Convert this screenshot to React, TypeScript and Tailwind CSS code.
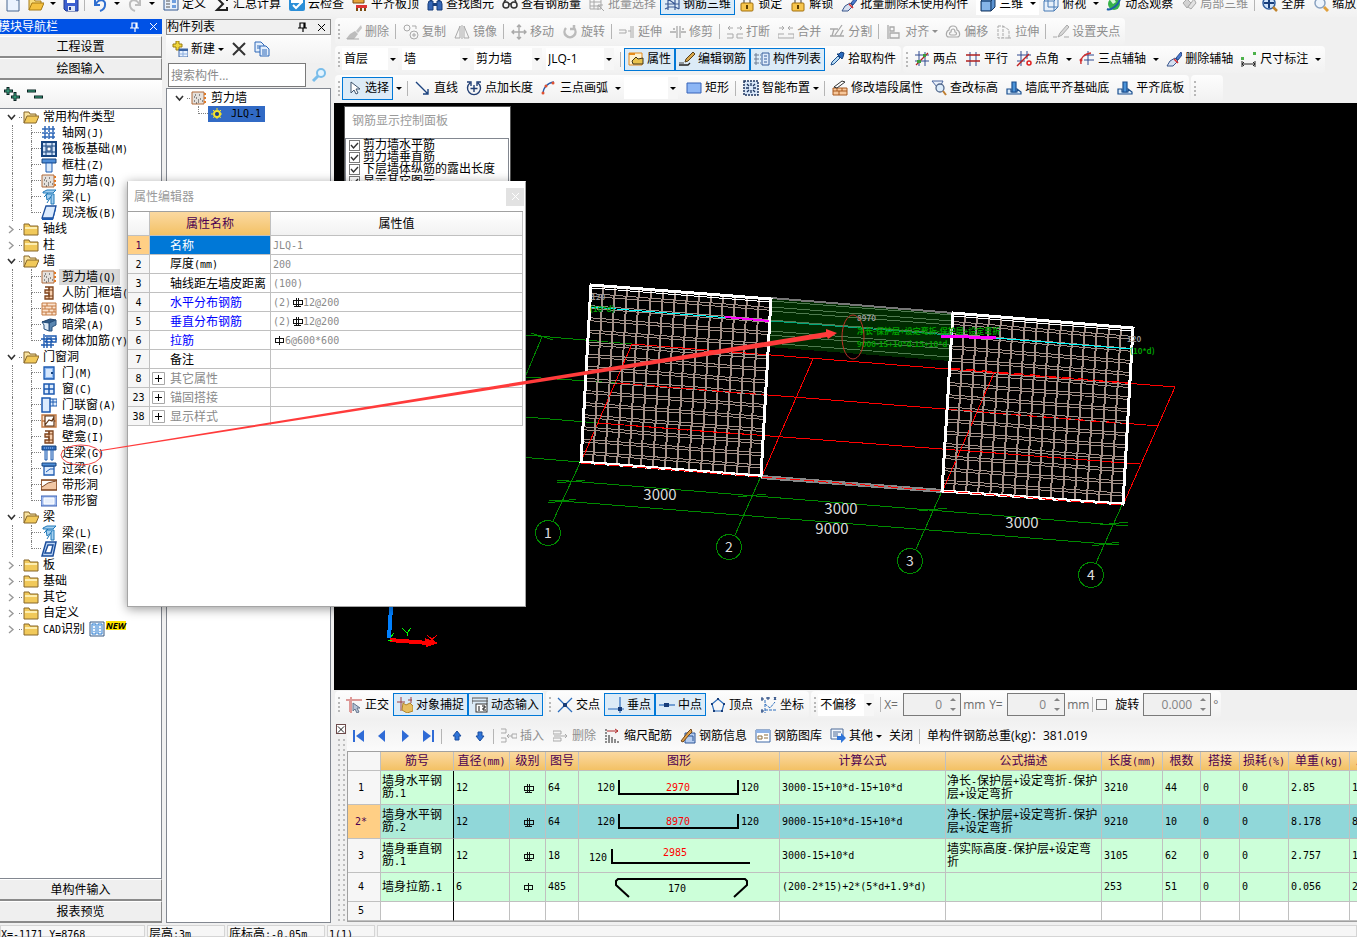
import { useState, type ReactNode } from 'react';
import clsx from 'clsx';

const MONO = "font-[family-name:'DejaVu_Sans_Mono',monospace] text-[10px]";

// 16x16 toolbar and tree glyphs
const G = '#a9a9a9';
const B = '#2f6bd6';
const icons: Record<string, ReactNode> = {
  newFile: <><path d="M2 1h9l3 3v11H2z" fill="#eaf3ff" stroke="#49668f" /><path d="M11 1v3h3" fill="none" stroke="#49668f" /></>,
  open: <><path d="M1 14V3h5l1 2h6v3" fill="#f9dc7c" stroke="#a87a14" /><path d="M1 14l3-7h12l-3 7z" fill="#f5c13f" stroke="#a87a14" /></>,
  save: <><path d="M1 1h14v14H3l-2-2z" fill="#3c5fd0" stroke="#203a90" /><path d="M4 1h8v6H4z" fill="#fff" /><path d="M5 10h7v5H5z" fill="#dfe6f5" /><path d="M6 11h2v3H6z" fill="#203a90" /></>,
  undo: <path d="M3 4v5h5M4 8c2-5 10-5 9 1c0 3-2 5-5 6" fill="none" stroke="#2f6fd0" strokeWidth="2" />,
  redo: <path d="M13 4v5H8M12 8c-2-5-10-5-9 1c0 3 2 5 5 6" fill="none" stroke="#bdbdbd" strokeWidth="2" />,
  define: <><path d="M1 2h14v12H1z" fill="#e8f0fb" stroke="#35598f" /><path d="M3 5h4M3 8h4M3 11h4" stroke="#555" /><path d="M9 4h4v3H9zM9 9h4v3H9z" fill="#6f9ede" /></>,
  sigma: <path d="M13 5V2H3l6 6-6 6h10v-3" fill="none" stroke="#222" strokeWidth="2" />,
  cloud: <><rect x="0" y="1" width="16" height="14" rx="2" fill="#2b8fd8" /><path d="M2 4c3-4 9-3 12 0v3H2z" fill="#fff" /><path d="M4 9l3 3 6-6" fill="none" stroke="#fff" strokeWidth="2" /></>,
  slabTop: <><path d="M1 3h11v4H1z" fill="#e5a33a" stroke="#7a4b10" /><path d="M4 9h11v3H4z" fill="#d33" /><path d="M5 12v3M9 12v3M13 12v3" stroke="#7a4b10" strokeWidth="2" /></>,
  find: <><path d="M2 5h4v9H1V8zM10 5h4l1 3v6h-5z" fill="#3566b5" stroke="#173d7a" /><path d="M3 2h2v3H3zM11 2h2v3h-2zM6 7h4v3H6z" fill="#173d7a" /></>,
  glasses: <><circle cx="4" cy="9" r="3" fill="none" stroke="#333" strokeWidth="1.500" /><circle cx="12" cy="9" r="3" fill="none" stroke="#333" strokeWidth="1.500" /><path d="M7 8h2M2 6l3-4M14 6l-2-4" stroke="#333" strokeWidth="1.500" /></>,
  batch: <path d="M1 2h11v11H1zM1 6h11M1 10h11M5 2v11M9 9l6 6M9 9v5M9 9h5" fill="none" stroke={G} />,
  rebar3d: <path d="M1 3h14M1 8h14M1 13l4-2h6l4 2M4 1v13M11 1v13M4 3l7 5M15 1v12" fill="none" stroke="#3a5a94" strokeWidth="1.200" />,
  lock: <><path d="M5 8V5a3 3 0 016 0v3" fill="none" stroke="#999" strokeWidth="2" /><rect x="2" y="7" width="12" height="8" rx="1" fill="#f7c64e" stroke="#a3700d" /><path d="M8 9v4" stroke="#5a3c00" strokeWidth="2" /></>,
  brush: <><path d="M15 1l-5 6 2 2 4-5z" fill="#4a7bd0" stroke="#2a4a8a" /><path d="M9 7l-5 3-3 5h6l5-5z" fill="#d5dff0" stroke="#3a568c" /><path d="M8 8l4 4" stroke="#d33" strokeWidth="1.600" /></>,
  brushGray: <><path d="M15 1l-5 6 2 2 4-5z" fill="#c6c6c6" /><path d="M9 7l-5 3-4 5h8l4-5z" fill="#bdbdbd" /><path d="M1 15h12" stroke={G} /></>,
  cube: <><path d="M1 5l4-4h10v10l-4 4H1z" fill="#5b92d0" stroke="#16365f" /><path d="M1 5h10v10M11 5l4-4" fill="none" stroke="#16365f" /><path d="M2 6h8v8H2z" fill="#86b5e8" /></>,
  top: <path d="M1 5l4-4h10v10l-4 4H1zM1 5h10v10M11 5l4-4M5 1v10h10" fill="#e7f0fa" stroke="#477bb5" />,
  orbit: <><circle cx="8" cy="8" r="6" fill="#37b34a" /><path d="M1 13C5 15 14 8 14 2" fill="none" stroke="#1d5ea8" strokeWidth="2" /><path d="M4 4l4-1 2 3-3 2z" fill="#d8f5da" /></>,
  orbitGray: <><path d="M2 7l4-4 4 4-4 5z" fill="#d2d2d2" stroke={G} /><path d="M7 11l6-8 2 4-5 6z" fill="#e2e2e2" stroke={G} /></>,
  zoomAll: <><circle cx="7" cy="7" r="6" fill="#cfe3fa" stroke="#315f9f" strokeWidth="1.500" /><path d="M7 2v10M2 7h10" stroke="#173d7a" strokeWidth="2" /><path d="M11 11l4 4" stroke="#c0832c" strokeWidth="2.500" /></>,
  zoomOut: <><circle cx="7" cy="7" r="5" fill="#edf4fc" stroke="#8aa2c0" strokeWidth="1.500" /><path d="M11 11l4 4" stroke="#e0a03c" strokeWidth="3" /></>,
  copy: <><circle cx="4" cy="4" r="3" fill="none" stroke={G} /><circle cx="11" cy="11" r="4" fill="none" stroke={G} /><path d="M9 2h4v3M11 9v4M9 11h4" fill="none" stroke={G} /></>,
  mirror: <path d="M6 2v12H1zM10 2v12h5zM8 1v14" fill="none" stroke={G} />,
  move: <path d="M8 1v14M1 8h14M6 3l2-2 2 2M6 13l2 2 2-2M3 6L1 8l2 2M13 6l2 2-2 2" fill="none" stroke={G} strokeWidth="1.400" />,
  rotate: <path d="M4 4a5.500 5.500 0 108 0M12 1v4H8" fill="none" stroke="#bbb" strokeWidth="2.500" />,
  extend: <path d="M0 6h7v3H0M9 7h3M14 2v12M12 2v12" fill="none" stroke={G} />,
  trim: <path d="M0 8h6M7 2v12M10 2v12M11 8h5M3 5h2M12 5h2" fill="none" stroke={G} strokeWidth="1.300" />,
  breakUp: <path d="M1 4h5M10 4h5M3 2L1 4l2 2M13 2l2 2-2 2M0 10h6v4H0M16 10h-6v4h6" fill="none" stroke={G} />,
  merge: <path d="M1 4h5M10 4h5M4 2l2 2-2 2M12 2l-2 2 2 2M0 10h6M10 10h6M0 14h16M0 10v4M16 10v4" fill="none" stroke={G} />,
  split: <path d="M1 5h8M1 12h14M13 1L6 11M3 12l2-7M11 12l3-6" fill="none" stroke={G} strokeWidth="1.300" />,
  align: <path d="M2 1v14M4 3h4v4H4zM4 9h9v5H4z" fill="none" stroke={G} strokeWidth="1.300" />,
  offset: <path d="M8 2c3 0 4 2 4 4 3 1 4 7 0 7H4C0 13 1 7 4 6c0-2 1-4 4-4zM8 5c2 0 2 2 2 3 2 0 2 3 0 3H6c-2 0-2-3 0-3 0-1 0-3 2-3z" fill="none" stroke={G} strokeWidth="1.200" />,
  stretch: <path d="M2 2h5v12H2zM7 2l6 4v8H7M12 14h4" fill="none" stroke={G} strokeDasharray="3 1" />,
  grip: <path d="M0 13h4M11 13h5M14 1L7 9l-2 4 4-2 7-8z" fill="#d8d8d8" stroke={G} />,
  props: <><path d="M1 2h13v12H1z" fill="#fff1d0" stroke="#e58b1c" /><path d="M1 2h6v2H1z" fill="#e58b1c" /><path d="M4 10l4-4 2 2 5-1v6H5z" fill="#e9c24d" stroke="#40361a" /></>,
  editRebar: <><path d="M0 14h9l2-2" fill="none" stroke="#222" strokeWidth="1.300" /><path d="M14 1L7 8l-1 3 3-1 7-7z" fill="#d9a74a" stroke="#57401a" /><path d="M0 12h5" stroke="#444" /></>,
  list: <><path d="M8 2h7v12H8z" fill="#dfebfa" stroke="#365f9c" /><path d="M10 5h3M10 8h3M10 11h3" stroke="#365f9c" /><path d="M1 3h2v2H1zM1 7h2v2H1zM1 11h2v2H1z" fill="none" stroke="#6d7d94" /><path d="M4 4h3M4 8h3M4 12h3" stroke="#6d7d94" strokeDasharray="1 1" /></>,
  picker: <><path d="M2 14l1-3 6-6 2 2-6 6z" fill="#b8dcf5" stroke="#1c4f8d" /><path d="M8 3l5 5 1-2 1-4-3-1-2 2z" fill="#2a6bbd" stroke="#153e78" /></>,
  twoPt: <><path d="M5 0v15M11 1v14M1 4h14M1 10h14" stroke="#304a90" fill="none" /><path d="M2 14L14 2" stroke="#b02020" strokeWidth="1.300" /><path d="M3 9h4v3H3zM9 3h3v3H9z" fill="#3d9a3a" /></>,
  parallel: <><path d="M5 1v14M11 1v14" stroke="#304a90" /><path d="M1 4h14M1 10h14" stroke="#b02020" strokeWidth="1.300" /></>,
  ptAngle: <><path d="M5 0v15M11 0v8M1 4h14M1 10h8" stroke="#304a90" /><path d="M1 15L13 3" stroke="#c02020" strokeWidth="1.400" /><circle cx="13" cy="12" r="2" fill="none" stroke="#e02020" strokeWidth="1.500" /></>,
  arcAxis: <><path d="M9 0v14M5 4h10M5 9h10" stroke="#304a90" /><path d="M2 13C1 7 5 3 12 2" fill="none" stroke="#d03030" strokeWidth="1.400" /><circle cx="2" cy="9" r="1.500" fill="#d03030" /></>,
  dim: <><path d="M1 10v6M14 10v6M1 13h13M3 11l-2 2 2 2M12 11l2 2-2 2" fill="none" stroke="#222" /><path d="M0 6h3v3H0zM12 1h3v3h-3z" fill="#4db24a" /></>,
  cursor: <path d="M5 2v11l3-3 2 4 2-1-2-4h4z" fill="#fff" stroke="#3f556e" />,
  line: <path d="M1 2l12 12M13 9v5H8" fill="none" stroke="#1c437f" strokeWidth="1.400" />,
  arcLen: <path d="M4 3a6.500 6.500 0 108 0M1 2h4v4M8 5v7M4.500 8.500h7M15 2h-4v4" fill="none" stroke="#223f74" strokeWidth="1.400" />,
  arc3: <><path d="M2 14C2 8 6 3 13 2" fill="none" stroke="#2b5caa" strokeWidth="1.400" /><circle cx="12" cy="3" r="1.500" fill="#e05030" /><circle cx="5" cy="6" r="1.500" fill="#e05030" /><circle cx="2" cy="13" r="1.500" fill="#e05030" /></>,
  rect: <path d="M1 3h14v10H1z" fill="#8db6f5" stroke="#3763b8" />,
  smart: <><path d="M1 1h14v14H1z" fill="#d8e6f7" stroke="#1c355f" strokeDasharray="2 1" strokeWidth="1.500" /><path d="M8 3v3M8 10v3M3 8h3M10 8h3M4 4l2 2M12 12l-2-2M12 4l-2 2M4 12l2-2" stroke="#1c355f" strokeWidth="1.300" /></>,
  wallEdit: <><path d="M1 8h14v7H1zM1 11h14M5 8v3M10 8v3M7 11v4" fill="#f7c79a" stroke="#a85a20" /><path d="M2 7l8-6 3 1-8 6z" fill="#fff" stroke="#333" /></>,
  level: <><path d="M1 1h11l-3 6H6z" fill="#e8effa" stroke="#4a67a0" /><circle cx="9" cy="8" r="4" fill="#dcecfb" stroke="#54698c" strokeWidth="1.300" /><path d="M12 11l3 4" stroke="#c07f30" strokeWidth="2" /></>,
  base: <><path d="M1 14V9h4v3h6V9l4 3v2z" fill="#d9ebfb" stroke="#1a4f8f" strokeWidth="1.200" /><path d="M6 12V2h4v10z" fill="#4b93d8" stroke="#1a4f8f" strokeWidth="1.200" /></>,
  ortho: <><path d="M4 15V3H0M2 3h14M5 0v16" fill="none" stroke="#dd9a98" strokeWidth="2" /><path d="M7 6v8l2-2 2 4 2-1-2-4h3z" fill="#b7c5d8" stroke="#64748c" /></>,
  snap: <><path d="M4 0v14M0 5h8M14 0v6M11 3h4" stroke="#9a4040" /><path d="M6 6l3 2 4-2 3 3v5l-6 2-5-3z" fill="#e7be60" stroke="#b08428" /></>,
  dyn: <><path d="M0 1h16M0 4h16M0 1v6M15 1v6" stroke="#555" /><rect x="4" y="7" width="11" height="8" fill="#fff" stroke="#333" /><path d="M7 9v5M10 9h3v2h-2v2h3" fill="none" stroke="#111" /></>,
  cross: <><path d="M1 1l14 14M15 1L1 15" stroke="#2b6dbd" strokeWidth="1.300" /><rect x="6" y="6" width="4" height="4" fill="#173d7a" /></>,
  perp: <><path d="M12 0v16M0 12h16" stroke="#2b6dbd" strokeWidth="1.200" /><rect x="10" y="10" width="4" height="4" fill="#173d7a" /></>,
  mid: <><path d="M0 8h16" stroke="#2b6dbd" strokeWidth="1.200" /><rect x="5" y="6" width="5" height="4" fill="#173d7a" /></>,
  vertex: <><path d="M8 2l6 5-2 7H4L2 7z" fill="none" stroke="#2b6dbd" strokeWidth="1.200" /><path d="M7 1h2v2H7zM13 6h2v2h-2zM1 6h2v2H1zM3 13h2v2H3zM11 13h2v2h-2z" fill="#173d7a" /></>,
  coord: <><path d="M4 3v13M4 13h12M4 7l5 4 5-6" fill="none" stroke="#2b6dbd" strokeDasharray="3 1" /><path d="M0 1h2v2H0zM6 0h2v2H6zM13 0l2 3M15 0l-2 3M0 13h2v2H0z" fill="none" stroke="#173d7a" /></>,
  first: <><path d="M3 2v12" stroke={B} strokeWidth="2" /><path d="M13 2v12L5 8z" fill={B} /></>,
  prev: <path d="M11 2v12L4 8z" fill={B} />,
  next: <path d="M5 2v12l7-6z" fill={B} />,
  last: <><path d="M13 2v12" stroke={B} strokeWidth="2" /><path d="M3 2v12l8-6z" fill={B} /></>,
  up: <path d="M8 3l4 5h-2v4H6V8H4z" fill="#2f74d8" stroke="#1b4d9e" />,
  down: <path d="M8 13l4-5h-2V4H6v4H4z" fill="#2f74d8" stroke="#1b4d9e" />,
  insert: <path d="M0 1h5v4H0M0 10h5v4H0M6 8h5M8 6L6 8l2 2M11 6h5v4h-5z" fill="none" stroke={G} />,
  remove: <path d="M0 3h8v3H0zM0 10h8v3H0zM1 8h13M12 6l2 2-2 2" fill="none" stroke={G} />,
  scale: <><path d="M1 1v14" stroke="#222" strokeDasharray="2 1" /><path d="M2 3h11M10 1l3 2-3 2" fill="none" stroke="#b02828" /><path d="M4 7v8M7 9v6M10 11v4M13 13v2" stroke="#222" /></>,
  info: <><path d="M5 5h10v10H5z" fill="#b5cdf0" stroke="#2d5596" /><path d="M1 13l7-9 3-3 1 3-3 3-6 7z" fill="#e0a24c" stroke="#714516" /><path d="M8 8h5v5" fill="none" stroke="#2d5596" /></>,
  lib: <><path d="M1 2h14v12H1z" fill="#fff" stroke="#3f69a6" /><path d="M1 2h14v3H1z" fill="#8fb2e5" /><path d="M3 8h4v3H3zM9 7h4M9 10h4" fill="none" stroke="#8c6d3a" /></>,
  other: <><path d="M1 1h12v10H1zM3 4h8M3 6h5M3 8h5" fill="#f3f7fd" stroke="#4d6a97" /><path d="M7 8h4V5l5 5-5 5v-3H7z" fill="#2f74d8" /></>,
  create: <><path d="M4 0h3v3h3v3H7v3H4V6H1V3h3z" fill="#f1d73c" stroke="#9b7c11" /><path d="M7 8h9v8H7z" fill="#eaf3ff" stroke="#3c64a4" /><path d="M7 8h9v2H7z" fill="#3c64a4" /><path d="M7 13h9M11 10v6" stroke="#8badde" /></>,
  del: <path d="M2 2l12 12M14 2L2 14" stroke="#333" strokeWidth="2" />,
  dup: <><path d="M1 1h6l3 3v7H1z" fill="#e4effc" stroke="#2f68b8" /><path d="M6 5h6l3 3v7H6z" fill="#e4effc" stroke="#2f68b8" /><path d="M8 9h5M8 11h5M8 13h5M3 5h3M3 7h3" stroke="#2f68b8" /></>,
  search: <><circle cx="10" cy="6" r="4" fill="#e4f4ff" stroke="#79bdea" strokeWidth="2" /><path d="M7 9l-5 5" stroke="#79bdea" strokeWidth="3" /></>,
  // tree
  folder: <><path d="M1 3h5l1 2h8v9H1z" fill="#f1c95a" stroke="#86662a" /><path d="M2 6h12v2H2z" fill="#fdeeb0" /></>,
  folderOpen: <><path d="M1 14V3h5l1 2h6v3" fill="#f9e3a0" stroke="#86662a" /><path d="M1 14l3-7h12l-3 7z" fill="#f1c95a" stroke="#86662a" /></>,
  grid: <path d="M4 1v14M8 1v14M12 1v14M1 4h14M1 8h14M1 12h14" stroke="#2f68b8" strokeWidth="1.500" strokeDasharray="6 1" />,
  raft: <><path d="M1 1h14v14H1z" fill="#cfe1f7" stroke="#16447f" strokeWidth="2" /><path d="M5 2v12M11 2v12M2 5h12M2 11h12" stroke="#16447f" /><path d="M6 6h4v4H6z" fill="#fff" stroke="#16447f" /></>,
  column: <><path d="M1 2h14v4H1z" fill="#4f8ed8" stroke="#16447f" /><path d="M5 6h6v9H5z" fill="#d8e9fb" stroke="#1d5ab0" /></>,
  wall: <><path d="M1 2h12v12H1z" fill="#e4e0dc" stroke="#b06a3a" /><path d="M3 11h1M5 8h1M7 12h1M4 5h1M9 9h1M5 13h1M8 5h1M11 11h1M7 10h1M3 7h1" stroke="#333" /><path d="M13 4h2M13 8h2M13 12h2" stroke="#e07b28" strokeWidth="2" /></>,
  beam: <><path d="M2 3l4-2h9l-3 3H2zM5 5h8v10h-3V8l-4 3z" fill="#a5d0f0" stroke="#1f78b8" /><path d="M3 8l4-4M6 14l5-8" stroke="#1f78b8" /></>,
  slab: <><path d="M5 1h10l-3 12H1z" fill="#dcebfd" stroke="#1d4f9c" strokeWidth="1.300" /><path d="M1 13h11l3-12v3l-3 11H1z" fill="#1d5ab0" /></>,
  door: <><path d="M3 2h10v12H3z" fill="#8fbaf2" stroke="#1d5ab0" strokeWidth="1.300" /><path d="M5 4h6v8H5z" fill="#d5e6fc" /><path d="M10 8h2" stroke="#16447f" strokeWidth="2" /></>,
  window: <><path d="M3 3h10v10H3z" fill="#dcebfd" stroke="#1d5ab0" strokeWidth="1.500" /><path d="M8 3v10M3 8h10" stroke="#1d5ab0" strokeWidth="1.500" /></>,
  doorWin: <><path d="M8 2h8v7H8z" fill="#dcebfd" stroke="#1d5ab0" /><path d="M12 2v7M8 5h8" stroke="#1d5ab0" /><path d="M1 1h8v14H1z" fill="#dcebfd" stroke="#1d5ab0" strokeWidth="1.500" /></>,
  shelter: <><path d="M4 2h8v12H4v-3h4V8H4V5h4V2" fill="#f6cfae" stroke="#7d431d" strokeWidth="1.300" /><path d="M8 2v12M8 5h4M8 11h4" stroke="#7d431d" /></>,
  brick: <path d="M1 2h14v12H1zM1 5h14M1 8h14M1 11h14M6 2v3M11 5v3M4 5v3M8 8v3M13 8v3M5 11v3M11 11v3" fill="#fbe3cf" stroke="#c47a42" />,
  hidden: <><path d="M1 5l8-3 6 1-7 3z" fill="#2f5a88" stroke="#1d3f66" /><path d="M8 6l7-3v5l-4 2v4H8z" fill="#5a86b0" stroke="#27517e" /><path d="M1 5l7 1v8l-5-2V8z" fill="#dbe8f5" stroke="#27517e" /></>,
  rebarWall: <path d="M3 1v14M6 4v11M10 4v11M0 6h16M0 12h13M4 3h11v6H4M4 9l4-4 4 4" fill="none" stroke="#1d5ab0" strokeWidth="1.400" />,
  hole: <><path d="M1 2h14v12H1zM1 8h14" fill="#fbe3cf" stroke="#c47a42" strokeWidth="1.400" /><path d="M4 3h9v10H4zM4 12l4-5 3 1 2-4" fill="#fff" stroke="#5d3213" strokeWidth="1.200" /></>,
  link: <><path d="M1 1h14v4H1z" fill="#2f68b8" stroke="#16447f" /><path d="M4 5h2v10H4zM10 5h2v10h-2z" fill="#cfe1f7" stroke="#1d5ab0" /><path d="M3 3h10" stroke="#9cc3f5" strokeDasharray="1 1" /></>,
  lintel: <><path d="M3 5h10v9H3z" fill="#dcebfd" stroke="#1d5ab0" strokeWidth="1.300" /><path d="M1 2h14v3H1z" fill="#4f8ed8" stroke="#16447f" /><path d="M5 11l4-3h4" fill="none" stroke="#1d5ab0" /></>,
  stripHole: <><path d="M0 3h16v10H0z" fill="#f2c7a4" stroke="#7d431d" strokeWidth="1.500" /><path d="M1 10l7-4 7-1V4H1z" fill="#fff" /><path d="M1 10l6-4 8-2" fill="none" stroke="#7d431d" /></>,
  stripWin: <><path d="M0 3h16v10H0z" fill="#9db8ec" stroke="#3d62b5" /><path d="M3 5h10v6H3z" fill="#e8f0fd" stroke="#fff" /></>,
  ring: <path d="M5 1h10l-3 14H1zM7 4h5l-2 8H4z" fill="#bdd7f7" fillRule="evenodd" stroke="#1d4f9c" strokeWidth="1.500" />,
  cad: <><path d="M1 1h14v14H1z" fill="#eef5fd" stroke="#3b5d86" /><path d="M3 3h4v10H3zM9 3h4v10H9z" fill="none" stroke="#2f7fd0" /><path d="M5 4v8M11 4v8" stroke="#2f7fd0" strokeDasharray="1 2" /></>,
};

function Icon({ name }: { name: string }) {
  return <svg className="w-4 h-4 shrink-0" viewBox="0 0 16 16" aria-hidden="true">{icons[name]}</svg>;
}

function Caret() {
  return <svg className="w-[6px] h-[3px] shrink-0" viewBox="0 0 6 3" aria-hidden="true"><path d="M0 0h6L3 3z" fill="currentColor" /></svg>;
}

// Latin runs take a half-width cell next to the full-width Chinese glyphs
function Mixed({ text }: { text: string }) {
  return (
    <>
      {text.split(/([\x20-\x7e]+)/).map((part, i) => (i % 2 ? <span key={i} className={MONO}>{part}</span> : part))}
    </>
  );
}

type ToolProps = { icon?: string; label?: string; active?: boolean; disabled?: boolean; menu?: boolean; split?: boolean; title?: string };

function Tool({ icon, label, active, disabled, menu, split, title }: ToolProps) {
  return (
    <>
      <button
        type="button"
        disabled={disabled}
        title={title}
        aria-label={label ? undefined : title}
        className={clsx(
          'flex h-[23px] shrink-0 items-center border whitespace-nowrap',
          label ? 'gap-[3px] px-[3px]' : 'w-[23px] justify-center',
          active ? 'border-[#0078d7] bg-[#dcebf7]' : 'border-transparent',
          disabled && 'text-[#8f8f8f]',
        )}
      >
        {icon && <Icon name={icon} />}
        {label}
        {menu && <span className="w-[5px] flex"><Caret /></span>}
      </button>
      {split && <button type="button" aria-label={`${label ?? title} 更多`} className="flex h-[23px] w-3 shrink-0 items-center justify-center"><Caret /></button>}
    </>
  );
}

function Sep() {
  return <span className="h-[15px] w-px shrink-0 mx-0.5 mr-[3px] bg-[#b5b5b5]" />;
}

function Grip() {
  return <span className="h-[15px] shrink-0 border-l-2 border-dotted border-[#b8b8b8] mx-0.5" />;
}

function Bar({ children }: { children: ReactNode }) {
  return <div className="flex h-[27px] shrink-0 items-center rounded-sm bg-linear-to-b from-[#fdfdfd] to-[#f1f1f1] px-px">{children}</div>;
}

function Combo({ value, label, width }: { value: string; label: string; width: string }) {
  return (
    <span className={clsx('relative flex h-[22px] shrink-0 items-center bg-white mr-1', width)}>
      <select aria-label={label} className="h-full w-full appearance-none pl-0.5 outline-none"><option>{value}</option></select>
      <span className="pointer-events-none absolute inset-y-0 right-0 flex w-[10px] items-center justify-center bg-[#f6f6f6]"><Caret /></span>
    </span>
  );
}

function Spin({ value, label, width }: { value: string; label: string; width: string }) {
  return (
    <span className={clsx('flex h-[23px] shrink-0 border border-[#7a7a7a] bg-[#f0f0f0] text-[#838383]', width)}>
      <input aria-label={label} defaultValue={value} className="min-w-0 flex-1 text-right outline-none" />
      <span className="flex w-[18px] flex-col items-center justify-around pl-1">
        <button type="button" aria-label={`${label} 增加`} className="rotate-180 flex"><Caret /></button>
        <button type="button" aria-label={`${label} 减少`} className="flex"><Caret /></button>
      </span>
    </span>
  );
}

function Pin() {
  return <svg className="w-3 h-3" viewBox="0 0 12 12" aria-hidden="true"><path d="M3 7V2h5v5M7 2v5M1 7h9M6 7v4" fill="none" stroke="currentColor" strokeWidth="1.200" /></svg>;
}

function Cross() {
  return <svg className="w-[9px] h-[9px]" viewBox="0 0 9 9" aria-hidden="true"><path d="M1 1l7 7M8 1L1 8" stroke="currentColor" /></svg>;
}

const tree: { label: string; items?: [string, string][] }[] = [
  { label: '常用构件类型', items: [['grid', '轴网(J)'], ['raft', '筏板基础(M)'], ['column', '框柱(Z)'], ['wall', '剪力墙(Q)'], ['beam', '梁(L)'], ['slab', '现浇板(B)']] },
  { label: '轴线' },
  { label: '柱' },
  { label: '墙', items: [['wall', '剪力墙(Q)'], ['shelter', '人防门框墙(RF)'], ['brick', '砌体墙(Q)'], ['hidden', '暗梁(A)'], ['rebarWall', '砌体加筋(Y)']] },
  { label: '门窗洞', items: [['door', '门(M)'], ['window', '窗(C)'], ['doorWin', '门联窗(A)'], ['hole', '墙洞(D)'], ['shelter', '壁龛(I)'], ['link', '连梁(G)'], ['lintel', '过梁(G)'], ['stripHole', '带形洞'], ['stripWin', '带形窗']] },
  { label: '梁', items: [['beam', '梁(L)'], ['ring', '圈梁(E)']] },
  { label: '板' },
  { label: '基础' },
  { label: '其它' },
  { label: '自定义' },
  { label: 'CAD识别' },
];

function Chevron({ open }: { open: boolean }) {
  return (
    <svg className="w-[9px] h-[9px]" viewBox="0 0 9 9" aria-hidden="true">
      {open ? <path d="M1 2l3.500 4L8 2" fill="none" stroke="#333" strokeWidth="1.600" /> : <path d="M2 1l4 3.500L2 8" fill="none" stroke="#999" strokeWidth="1.400" />}
    </svg>
  );
}

function ModuleTree() {
  const [open, setOpen] = useState<string[]>(tree.filter((n) => n.items).map((n) => n.label));
  const toggle = (label: string) => setOpen((o) => (o.includes(label) ? o.filter((l) => l !== label) : [...o, label]));

  return (
    <ul className="min-h-0 flex-1 overflow-hidden border border-l-0 border-[#828790] bg-white whitespace-nowrap">
      {tree.map((node) => (
        <li key={node.label}>
          <button type="button" onClick={() => toggle(node.label)} className="flex h-4 items-center pl-[7px]">
            <Chevron open={open.includes(node.label)} />
            <span className="w-[3px] ml-[3px] mr-px border-t border-dotted border-[#808080]" />
            <Icon name={open.includes(node.label) ? 'folderOpen' : 'folder'} />
            <span className="ml-1"><Mixed text={node.label} /></span>
            {node.label === 'CAD识别' && (
              <>
                <span className="ml-1 flex"><Icon name="cad" /></span>
                <span className="ml-px mb-2 bg-[#ffe600] text-[9px] leading-[9px] font-bold italic">NEW</span>
              </>
            )}
          </button>
          {node.items && open.includes(node.label) && (
            <ul>
              {node.items.map(([icon, label], i) => (
                <li key={label} className="flex h-4 items-center pl-3">
                  <span className="h-4 w-[19px] shrink-0 border-l border-dotted border-[#808080]" />
                  <span className="flex h-4 w-[10px] shrink-0 flex-col">
                    <span className="h-2 border-b border-l border-dotted border-[#808080]" />
                    {i < node.items!.length - 1 && <span className="h-2 border-l border-dotted border-[#808080]" />}
                  </span>
                  <Icon name={icon} />
                  <a href="#" className={clsx('ml-0.5 pl-[3px] pr-1 h-4 leading-4', node.label === '墙' && i === 0 && 'bg-[#d9d9d9]')}><Mixed text={label} /></a>
                </li>
              ))}
            </ul>
          )}
        </li>
      ))}
    </ul>
  );
}

const navBtn = 'h-[22px] shrink-0 border-r border-b-2 border-t border-t-white border-[#8a8a8a] bg-[#efefef] leading-[19px]';

function ModuleNav() {
  return (
    <aside className="flex w-[162px] shrink-0 flex-col pt-px">
      <div className="flex h-[15px] shrink-0 items-center justify-between overflow-hidden bg-[#0052e6] pr-1 text-white">
        <h2 className="-ml-0.5">模块导航栏</h2>
        <span className="flex items-center gap-2"><Pin /><Cross /></span>
      </div>
      <div className="flex flex-col pt-0.5">
        <button type="button" className={navBtn}>工程设置</button>
        <button type="button" className={navBtn}>绘图输入</button>
      </div>
      <div className="flex h-[28px] shrink-0 items-center gap-1 pl-1 bg-linear-to-b from-white to-[#f1f1f1]">
        <button type="button" aria-label="全部展开">
          <svg className="w-[18px] h-4" viewBox="0 0 18 16"><path d="M4 1v8M0 5h9M11 6v9M7 11h9" stroke="#0a2020" strokeWidth="3" /><path d="M4 2v6M1 5h7M11 7v7M8 11h7" stroke="#3fb58c" /></svg>
        </button>
        <button type="button" aria-label="全部折叠">
          <svg className="w-[18px] h-4" viewBox="0 0 18 16"><path d="M1 5h9M8 11h9" stroke="#0a2020" strokeWidth="3" /><path d="M2 5h7M9 11h7" stroke="#3fb58c" /></svg>
        </button>
      </div>
      <ModuleTree />
      <div className="flex flex-col">
        <button type="button" className={navBtn}>单构件输入</button>
        <button type="button" className={navBtn}>报表预览</button>
      </div>
    </aside>
  );
}

function ComponentList() {
  return (
    <aside className="ml-1 flex w-[165px] shrink-0 flex-col pt-px">
      <div className="flex h-4 shrink-0 items-center justify-between border border-[#8a8a8a] pr-1">
        <h2>构件列表</h2>
        <span className="flex items-center gap-2"><Pin /><Cross /></span>
      </div>
      <div className="flex h-[28px] shrink-0 items-center pl-0.5 bg-linear-to-b from-[#fdfdfd] to-[#f1f1f1]">
        <Tool icon="create" label="新建" menu />
        <Tool icon="del" title="删除" />
        <Tool icon="dup" title="复制" />
      </div>
      <div className="flex h-6 shrink-0 items-center">
        <input aria-label="搜索构件" placeholder="搜索构件..." className="ml-0.5 h-6 w-[138px] border border-[#7a7a7a] bg-white px-0.5 outline-none placeholder:text-[#8a8a8a]" />
        <button type="button" aria-label="搜索" className="flex flex-1 justify-center"><Icon name="search" /></button>
      </div>
      <ul className="mt-px flex-1 border border-[#828790] bg-white pt-px">
        <li className="flex h-4 items-center pl-2">
          <Chevron open />
          <span className="w-[3px] ml-[3px] mr-px border-t border-dotted border-[#808080]" />
          <Icon name="wall" />
          <span className="ml-1">剪力墙</span>
        </li>
        <li className="flex h-4 pl-[31px]">
          <span className="h-2 w-[10px] border-b border-l border-dotted border-[#808080]" />
          <span className="flex w-[57px] items-center gap-2 bg-[#316ac5] px-[3px]">
            <svg className="w-3 h-3" viewBox="0 0 12 12"><circle cx="6" cy="6" r="3" fill="none" stroke="#f5e32b" strokeWidth="2" /><path d="M6 0v12M0 6h12M2 2l8 8M10 2l-8 8" stroke="#f5e32b" strokeDasharray="2 1" /><circle cx="6" cy="6" r="2" fill="#1f3f80" /></svg>
            <Mixed text="JLQ-1" />
          </span>
        </li>
      </ul>
    </aside>
  );
}

type Pt = [number, number];
const lerp = (a: Pt, b: Pt, t: number): Pt => [a[0] + (b[0] - a[0]) * t, a[1] + (b[1] - a[1]) * t];

function Mesh({ tl, tr, br, bl }: { tl: Pt; tr: Pt; br: Pt; bl: Pt }) {
  const cols = Array.from({ length: 14 }, (_, i) => (i + 1) / 15);
  const rows = Array.from({ length: 14 }, (_, i) => (i + 0.7) / 14.600);
  const seg = (a: Pt, b: Pt) => `M${a[0].toFixed(1)} ${a[1].toFixed(1)}L${b[0].toFixed(1)} ${b[1].toFixed(1)}`;
  return (
    <g fill="none">
      <path d={cols.map((t) => seg(lerp(tl, tr, t), lerp(bl, br, t))).join('')} stroke="#a39189" strokeWidth="2" />
      <path d={rows.map((t) => seg(lerp(tl, bl, t), lerp(tr, br, t)) + seg(lerp(tl, bl, t + 0.016), lerp(tr, br, t + 0.016))).join('')} stroke="#a39189" />
    </g>
  );
}

const wall1 = { tl: [591, 285] as Pt, tr: [771, 299] as Pt, br: [761, 476] as Pt, bl: [581, 462] as Pt };
const wall2 = { tl: [953, 313] as Pt, tr: [1133, 328] as Pt, br: [1123, 504] as Pt, bl: [942, 491] as Pt };
const bubbles: [number, number, string][] = [[548, 533, '1'], [729, 547, '2'], [910, 561, '3'], [1091, 575, '4']];
const spans: [number, number, string][] = [[660, 500, '3000'], [841, 514, '3000'], [832, 534, '9000'], [1022, 528, '3000']];

function Viewport() {
  return (
    <section className="min-h-0 flex-1 overflow-hidden bg-black" aria-label="三维视图">
      <svg className="block h-full w-full">
        <g transform="translate(-334 -103)" shapeRendering="crispEdges" fill="none" fontFamily="'Noto Sans CJK SC', sans-serif">
          <path d="M526 335L632 344M526 377L617 383M526 417L598 423M520 457L580 462M542 337L526 375M531 333L553 340" stroke="#008a00" />
          <path d="M557 480L1128 526M549 500L1119 545M557 483L585 480M738 497L766 494M919 511L947 508M1100 525L1128 522M548 503L576 499M1092 546L1119 542" stroke="#008a00" />
          <path d="M580 463L553 521M761 476L735 535M942 491L916 549M1122 505L1096 563" stroke="#008a00" />
          <path d="M632 344L1175 387L1123 505M617 383L1159 426M598 423L1140 464M632 344L581 462M813 359L762 476M994 373L943 490" stroke="#f00" />
          <path d="M771 298L953 313L950 361L768 347z" fill="#002b00" />
          <path d="M771 298L953 313" stroke="#777" strokeWidth="2" />
          <path d="M771 301L953 315M771 307L952 321M770 311L952 325M770 320L951 334M770 331L951 345M769 335L951 349M769 343L950 357" stroke="#4f7a4f" />
          <path d="M771 321L950 335" stroke="#00a87c" />
          <Mesh {...wall1} />
          <Mesh {...wall2} />
          <path d="M632 344L770 355M617 383L766 395M598 423L764 436M950 368L1131 383M947 409L1127 424M944 449L1124 463M632 344L581 462M994 373L943 490" stroke="#f00" strokeDasharray="10 6" />
          <path d="M761 477L942 491" stroke="#8a8a8a" strokeWidth="4" />
          <path d="M591 285L771 299L761 476L581 462z" stroke="#fff" strokeWidth="3" />
          <path d="M953 313L1133 328L1123 504L942 491z" stroke="#fff" strokeWidth="3" />
          <path d="M592 288L770 302M954 316L1132 331" stroke="#fff" />
          <path d="M581 463L762 477L942 491L1123 505" stroke="#f00" strokeDasharray="10 4" />
          <path d="M591 307L769 321M995 338L1131 349" stroke="#0ff" />
          <path d="M725 317L769 321" stroke="#f0f" strokeWidth="2" />
          <path d="M941 336L996 338" stroke="#f0f" strokeWidth="3" />
          {bubbles.map(([x, y, n]) => (
            <g key={n}>
              <circle cx={x} cy={y} r="12.500" stroke="#008a00" />
              <text x={x} y={y + 5} fill="#ddd" fontSize="14" textAnchor="middle">{n}</text>
            </g>
          ))}
          {spans.map(([x, y, n]) => <text key={x} x={x} y={y} fill="#ddd" fontSize="15" textAnchor="middle">{n}</text>)}
          <g fontSize="8" fontWeight="700" fill="#999">
            <text x="591" y="300">120</text>
            <text x="857" y="321">8970</text>
            <text x="1127" y="342">120</text>
          </g>
          <g fontSize="8" fontWeight="700" fill="#00a000">
            <text x="590" y="312">(10*d)</text>
            <text x="857" y="334">净长-保护层+设定弯折-保护层+设定弯折</text>
            <text x="857" y="347">9000-15+10*d-15+10*d</text>
            <text x="1130" y="354">(10*d)</text>
          </g>
          <path d="M391 607L389 638" stroke="#0080ff" strokeWidth="4" />
          <path d="M390 640L428 643" stroke="#f00" strokeWidth="4" />
          <path d="M425 638L438 643L426 647z" fill="#f00" />
          <path d="M388 640h4M391 637l3-4M402 628l5 5 4-5M407 633v3" stroke="#0f0" />
          <path d="M427 635l10 9M437 635l-10 9" stroke="#f00" />
        </g>
      </svg>
    </section>
  );
}

function Rebar({ grade }: { grade: 1 | 3 }) {
  return (
    <svg className="inline-block h-[11px] w-3 align-[-2px]" viewBox="0 0 12 11" role="img" aria-label={grade === 1 ? 'HPB300' : 'HRB400'} shapeRendering="crispEdges">
      <path d={grade === 1 ? 'M2 3.500h8v4H2zM6.500 1v9' : 'M2 3.500h9v4H2zM5.500 1v9M7.500 1v9M3 9.500h7'} fill="none" stroke="#111" />
    </svg>
  );
}

type Shape = { d: string; marks: [number, number, string, boolean?][] };
const uShape = (len: string): Shape => ({ d: 'M40 8V22H159V8', marks: [[27, 19, '120'], [99, 19, len, true], [171, 19, '120']] });

type BarRow = { no: string; name: string; dia: string; grade?: 1 | 3; fig: string; shape?: Shape; formula: string; desc: string; rest: string[]; height: string };
const barRows: BarRow[] = [
  { no: '1', name: '墙身水平钢筋.1', dia: '12', grade: 3, fig: '64', shape: uShape('2970'), formula: '3000-15+10*d-15+10*d', desc: '净长-保护层+设定弯折-保护层+设定弯折', rest: ['3210', '44', '0', '0', '2.85', '125.4'], height: 'h-[34px]' },
  { no: '2*', name: '墙身水平钢筋.2', dia: '12', grade: 3, fig: '64', shape: uShape('8970'), formula: '9000-15+10*d-15+10*d', desc: '净长-保护层+设定弯折-保护层+设定弯折', rest: ['9210', '10', '0', '0', '8.178', '81.78'], height: 'h-[34px]' },
  { no: '3', name: '墙身垂直钢筋.1', dia: '12', grade: 3, fig: '18', shape: { d: 'M33 9V23H171', marks: [[19, 21, '120'], [96, 16, '2985', true]] }, formula: '3000-15+10*d', desc: '墙实际高度-保护层+设定弯折', rest: ['3105', '62', '0', '0', '2.757', '170.934'], height: 'h-[34px]' },
  { no: '4', name: '墙身拉筋.1', dia: '6', grade: 1, fig: '485', shape: { d: 'M50 26L37 14V10L39 8H166L168 10V14L155 26', marks: [[98, 21, '170']] }, formula: '(200-2*15)+2*(5*d+1.9*d)', desc: '', rest: ['253', '51', '0', '0', '0.056', '2.856'], height: 'h-[29px]' },
  { no: '5', name: '', dia: '', fig: '', formula: '', desc: '', rest: ['', '', '', '', '', ''], height: 'h-[19px]' },
];
const barCols: [string, number][] = [['', 33], ['筋号', 73], ['直径(mm)', 56], ['级别', 36], ['图号', 33], ['图形', 201], ['计算公式', 166], ['公式描述', 156], ['长度(mm)', 61], ['根数', 38], ['搭接', 39], ['损耗(%)', 49], ['单重(kg)', 61], ['总重(kg)', 61]];

function RebarTable() {
  const cell = 'border-r border-b border-[#c0c0c0] px-0.5 py-0';
  return (
    <div className="min-w-0 flex-1 overflow-hidden border-y border-l border-[#a0a0a0] bg-white">
      <table className="w-[1063px] table-fixed border-separate border-spacing-0 text-left leading-3">
        <colgroup>{barCols.map(([name, width]) => <col key={name} style={{ width }} />)}</colgroup>
        <thead>
          <tr className="h-[19px]">
            {barCols.map(([name]) => (
              <th key={name} scope="col" className={clsx('overflow-hidden border-r border-b border-[#c0c0c0] p-0 text-center font-normal whitespace-nowrap text-[#4b0050]', name ? 'bg-linear-to-b from-[#fbd9a0] to-[#f3c164]' : 'bg-[#f6f6f6]')}>
                <Mixed text={name} />
              </th>
            ))}
          </tr>
        </thead>
        <tbody>
          {barRows.map((row) => {
            const current = row.no === '2*';
            return (
              <tr key={row.no} className={clsx(row.height, current ? 'bg-[#90d7d9]' : row.name ? 'bg-[#ccffd9]' : 'bg-white')}>
                <th scope="row" className={clsx('border-r border-b border-[#c0c0c0] p-0 pr-1.5 text-center font-normal', MONO, current ? 'bg-[#ffcf85] text-[#4b0050]' : 'bg-[#f6f6f6]')}>{row.no}</th>
                <td className={clsx('border-r border-b border-r-black border-b-[#c0c0c0] py-0 pl-px pr-2', current && 'bg-[#aeebd8]')}><Mixed text={row.name} /></td>
                <td className={clsx(cell, MONO)}>{row.dia}</td>
                <td className={clsx(cell, 'text-center')}>{row.grade && <Rebar grade={row.grade} />}</td>
                <td className={clsx(cell, MONO)}>{row.fig}</td>
                <td className="border-r border-b border-[#c0c0c0] p-0">
                  {row.shape && (
                    <svg className="block h-[28px] w-[200px]" viewBox="0 2 200 28">
                      <path d={row.shape.d} fill="none" stroke="#000" strokeWidth="2" />
                      {row.shape.marks.map(([x, y, text, red]) => (
                        <text key={x} x={x} y={y} fill={red ? '#f00' : '#000'} fontSize="10" fontFamily="'DejaVu Sans Mono', monospace" textAnchor="middle">{text}</text>
                      ))}
                    </svg>
                  )}
                </td>
                <td className={clsx(cell, MONO, 'whitespace-nowrap')}>{row.formula}</td>
                <td className="border-r border-b border-[#c0c0c0] py-0 pl-px pr-0"><Mixed text={row.desc} /></td>
                {row.rest.map((v, i) => <td key={i} className={clsx(cell, MONO)}>{v}</td>)}
              </tr>
            );
          })}
        </tbody>
      </table>
    </div>
  );
}

function SnapBar() {
  return (
    <div className="flex h-[29px] shrink-0 items-center gap-0.5 pl-px">
      <Bar>
        <Grip />
        <Tool icon="ortho" label="正交" />
        <Tool icon="snap" label="对象捕捉" active />
        <Tool icon="dyn" label="动态输入" active />
      </Bar>
      <Bar>
        <Grip />
        <Tool icon="cross" label="交点" />
        <Tool icon="perp" label="垂点" active />
        <Tool icon="mid" label="中点" active />
        <Tool icon="vertex" label="顶点" />
        <Tool icon="coord" label="坐标" />
      </Bar>
      <Bar>
        <Grip />
        <Combo value="不偏移" label="偏移方式" width="w-[56px]" />
        <Sep />
        <span className="flex items-center text-[#6d6d6d]">
          <span className="w-[19px]">X=</span>
          <Spin value="0" label="X" width="w-[58px]" />
          <span className="w-[28px] pl-0.5">mm</span>
          <span className="w-[18px]">Y=</span>
          <Spin value="0" label="Y" width="w-[58px]" />
          <span className="w-[25px] pl-0.5">mm</span>
        </span>
        <Sep />
        <label className="flex items-center gap-2 pr-1">
          <input type="checkbox" className="h-[11px] w-[11px] appearance-none border border-[#7a7a7a] bg-[#f6f6f6]" />
          旋转
        </label>
        <Spin value="0.000" label="旋转角度" width="w-[68px]" />
        <span className="px-0.5 text-[#6d6d6d]">°</span>
      </Bar>
    </div>
  );
}

function RebarEditor() {
  return (
    <section className="flex shrink-0 pb-px">
      <div className="flex w-[13px] shrink-0 flex-col items-center gap-1 pt-[5px]">
        <button type="button" aria-label="关闭面板" className="flex h-[10px] w-[10px] items-center justify-center border border-[#6d4a4a] bg-white"><Cross /></button>
        <svg className="min-h-0 w-2 flex-1" aria-hidden="true">
          <defs><pattern id="dots" width="5" height="5" patternUnits="userSpaceOnUse"><rect x="1" y="1" width="2" height="2" fill="#bdbdbd" /></pattern></defs>
          <rect width="100%" height="100%" fill="url(#dots)" />
        </svg>
      </div>
      <div className="flex min-w-0 flex-1 flex-col">
        <div className="flex h-8 items-center pt-0.5 bg-linear-to-b from-[#f0f0f0] to-[#fbfbfb]">
          <Tool icon="first" title="第一条" />
          <Tool icon="prev" title="上一条" />
          <Tool icon="next" title="下一条" />
          <Tool icon="last" title="最后一条" />
          <Sep />
          <Tool icon="up" title="上移" />
          <Tool icon="down" title="下移" />
          <Sep />
          <span className="flex gap-px">
            <Tool icon="insert" label="插入" disabled />
            <Tool icon="remove" label="删除" disabled />
            <Tool icon="scale" label="缩尺配筋" />
          </span>
          <Tool icon="info" label="钢筋信息" />
          <Tool icon="lib" label="钢筋图库" />
          <Tool icon="other" label="其他" menu />
          <Tool label="关闭" />
          <Sep />
          <span className="pl-1 whitespace-nowrap">单构件钢筋总重(kg)：381.019</span>
        </div>
        <RebarTable />
      </div>
    </section>
  );
}

function MainToolbars() {
  return (
    <>
      <div className="flex h-[27px] shrink-0 items-center pl-px">
        <Bar>
          <Grip />
          <Tool icon="brushGray" label="删除" disabled />
          <Sep />
          <Tool icon="copy" label="复制" disabled />
          <Tool icon="mirror" label="镜像" disabled />
          <Sep />
          <Tool icon="move" label="移动" disabled />
          <Tool icon="rotate" label="旋转" disabled />
          <Sep />
          <Tool icon="extend" label="延伸" disabled />
          <Tool icon="trim" label="修剪" disabled />
          <Sep />
          <Tool icon="breakUp" label="打断" disabled />
          <Tool icon="merge" label="合并" disabled />
          <Tool icon="split" label="分割" disabled />
          <Sep />
          <Tool icon="align" label="对齐" disabled menu />
          <Tool icon="offset" label="偏移" disabled />
          <Tool icon="stretch" label="拉伸" disabled />
          <Sep />
          <Tool icon="grip" label="设置夹点" disabled />
        </Bar>
      </div>
      <div className="flex h-[28px] shrink-0 items-center gap-0.5 pl-px">
        <Bar>
          <Grip />
          <Combo value="首层" label="楼层" width="w-[56px]" />
          <Combo value="墙" label="构件类型" width="w-[68px]" />
          <Combo value="剪力墙" label="构件" width="w-[68px]" />
          <Combo value="JLQ-1" label="构件名称" width="w-[68px]" />
          <Sep />
          <Tool icon="props" label="属性" active />
          <Tool icon="editRebar" label="编辑钢筋" active />
          <Tool icon="list" label="构件列表" active />
          <Tool icon="picker" label="拾取构件" />
        </Bar>
        <Bar>
          <Grip />
          <Tool icon="twoPt" label="两点" />
          <Tool icon="parallel" label="平行" />
          <Tool icon="ptAngle" label="点角" split />
          <Tool icon="arcAxis" label="三点辅轴" split />
          <Tool icon="brush" label="删除辅轴" />
          <Tool icon="dim" label="尺寸标注" split />
        </Bar>
      </div>
      <div className="flex h-[30px] shrink-0 items-center gap-0.5 pl-px">
        <Bar>
          <Grip />
          <Tool icon="cursor" label="选择" active split />
          <Sep />
          <Tool icon="line" label="直线" />
          <Tool icon="arcLen" label="点加长度" />
          <Tool icon="arc3" label="三点画弧" split />
          <Combo value="" label="绘制方式" width="w-[54px]" />
          <Tool icon="rect" label="矩形" />
          <Sep />
          <Tool icon="smart" label="智能布置" menu />
          <Sep />
          <Tool icon="wallEdit" label="修改墙段属性" />
          <Tool icon="level" label="查改标高" />
          <Tool icon="base" label="墙底平齐基础底" />
          <Tool icon="base" label="平齐底板" />
        </Bar>
        <Bar><Grip /><span className="w-6" /></Bar>
      </div>
    </>
  );
}

function RebarDisplayPanel() {
  return (
    <section className="absolute top-[106px] left-[344px] h-[90px] w-[167px] overflow-hidden border border-[#555] bg-white">
      <h2 className="h-[31px] pl-[7px] leading-[28px] text-[#9a9a9a]">钢筋显示控制面板</h2>
      <div className="mr-px border border-[#828790] pl-[3px]">
        {['剪力墙水平筋', '剪力墙垂直筋', '下层墙体纵筋的露出长度', '显示其它图元'].map((label) => (
          <label key={label} className="flex h-3 items-center gap-[3px] leading-3 whitespace-nowrap">
            <span className="grid h-[11px] w-[11px]">
              <input type="checkbox" defaultChecked className="peer col-start-1 row-start-1 h-[11px] w-[11px] appearance-none border border-[#7a7a7a] bg-white" />
              <svg className="pointer-events-none col-start-1 row-start-1 hidden peer-checked:block" viewBox="0 0 11 11"><path d="M2 5l2.500 3L9 3" fill="none" stroke="#333" strokeWidth="1.400" /></svg>
            </span>
            {label}
          </label>
        ))}
      </div>
    </section>
  );
}

const props: { no: string; name: string; value?: ReactNode; kind?: 'current' | 'link' | 'group' }[] = [
  { no: '1', name: '名称', value: 'JLQ-1', kind: 'current' },
  { no: '2', name: '厚度(mm)', value: '200' },
  { no: '3', name: '轴线距左墙皮距离', value: '(100)' },
  { no: '4', name: '水平分布钢筋', value: <>(2)<Rebar grade={3} />12@200</>, kind: 'link' },
  { no: '5', name: '垂直分布钢筋', value: <>(2)<Rebar grade={3} />12@200</>, kind: 'link' },
  { no: '6', name: '拉筋', value: <><Rebar grade={1} />6@600*600</>, kind: 'link' },
  { no: '7', name: '备注' },
  { no: '8', name: '其它属性', kind: 'group' },
  { no: '23', name: '锚固搭接', kind: 'group' },
  { no: '38', name: '显示样式', kind: 'group' },
];

function PropertyEditor() {
  return (
    <section className="absolute top-[181px] left-[127px] h-[426px] w-[399px] border border-[#a5a5a5] border-t-white bg-white shadow-[0_2px_10px_rgba(0,0,0,0.4)]">
      <div className="flex h-[29px] items-center justify-between pl-1.5 pr-px">
        <h2 className="text-[#9a9a9a]">属性编辑器</h2>
        <button type="button" aria-label="关闭" className="flex h-[18px] w-[18px] items-center justify-center bg-[#e2e2e2] text-white"><Cross /></button>
      </div>
      <table className="w-[395px] table-fixed border-separate border-spacing-0 border-t border-[#a0a0a0] leading-4">
        <colgroup><col className="w-[22px]" /><col className="w-[121px]" /><col /></colgroup>
        <thead>
          <tr className="h-6 bg-linear-to-b from-white to-[#f1f1f1]">
            <th className="border-r border-b border-[#c0c0c0] p-0" aria-label="序号" />
            <th scope="col" className="border-r border-b border-[#c0c0c0] bg-linear-to-b from-[#fbd9a0] to-[#f3c164] p-0 pt-px font-normal text-[#4b0050]">属性名称</th>
            <th scope="col" className="border-r border-b border-[#c0c0c0] p-0 pt-px font-normal">属性值</th>
          </tr>
        </thead>
        <tbody>
          {props.map((p) => (
            <tr key={p.no} className="h-[19px]">
              <th scope="row" className={clsx('border-r border-b border-[#c0c0c0] p-0 pt-px text-center font-normal', MONO, p.kind === 'current' ? 'bg-[#ffcf85] text-[#4b0050]' : 'bg-[#f6f6f6]')}>{p.no}</th>
              <td className={clsx('border-r border-b border-[#c0c0c0] p-0 pt-px whitespace-nowrap', p.kind === 'current' && 'bg-[#0078d7] text-white', p.kind === 'link' && 'text-[#0000ff]', p.kind === 'group' && 'text-[#8a8a8a]')}>
                <span className="flex items-center">
                  <span className="flex w-5 shrink-0 pl-0.5">
                    {p.kind === 'group' && <button type="button" aria-label={`展开${p.name}`} className="h-[13px] w-[13px]"><svg viewBox="0 0 13 13"><path d="M.5 .5h12v12H.5z" fill="#fff" stroke="#a8a8a8" /><path d="M3 6.500h7M6.500 3v7" stroke="#000" /></svg></button>}
                  </span>
                  <span><Mixed text={p.name} /></span>
                </span>
              </td>
              <td className={clsx('border-r border-b border-[#c0c0c0] pb-0 pt-px pl-0.5 pr-0 text-[#8a8a8a]', MONO)}>{p.value}</td>
            </tr>
          ))}
        </tbody>
      </table>
    </section>
  );
}

export default function App() {
  return (
    <div className="relative flex h-screen flex-col overflow-hidden bg-[#f0f0f0] font-[family-name:'Open_Sans','Noto_Sans_CJK_SC',sans-serif] text-xs text-black">
      <header className="flex h-[18px] shrink-0 items-end overflow-hidden pb-px">
        <Bar>
          <span className="flex w-[158px] items-center">
            <Tool icon="newFile" title="新建工程" />
            <Tool icon="open" title="打开" split />
            <Tool icon="save" title="保存" />
            <Sep />
            <Tool icon="undo" title="撤销" split />
            <Tool icon="redo" title="恢复" disabled split />
          </span>
          <Tool icon="define" label="定义" />
          <Tool icon="sigma" label="汇总计算" />
          <Tool icon="cloud" label="云检查" />
          <Tool icon="slabTop" label="平齐板顶" />
          <Tool icon="find" label="查找图元" />
          <Tool icon="glasses" label="查看钢筋量" />
          <Tool icon="batch" label="批量选择" disabled />
          <Tool icon="rebar3d" label="钢筋三维" active />
          <Tool icon="lock" label="锁定" />
          <Tool icon="lock" label="解锁" />
          <Tool icon="brush" label="批量删除未使用构件" />
          <span className="ml-1 flex bg-white"><Tool icon="cube" label="三维" split /></span>
          <Tool icon="top" label="俯视" split />
          <Tool icon="orbit" label="动态观察" />
          <Tool icon="orbitGray" label="局部三维" disabled />
          <Sep />
          <Tool icon="zoomAll" label="全屏" />
          <Tool icon="zoomOut" label="缩放" />
        </Bar>
      </header>

      <div className="flex min-h-0 flex-1">
        <ModuleNav />
        <ComponentList />
        <main className="ml-[3px] flex min-w-0 flex-1 flex-col">
          <MainToolbars />
          <Viewport />
          <SnapBar />
          <RebarEditor />
        </main>
      </div>

      <footer className="flex h-[14px] shrink-0 gap-0.5 overflow-hidden pt-0.5 leading-4 whitespace-nowrap">
        <span className="w-[145px] border border-[#d5d5d5] bg-[#f6f6f6]"><Mixed text="X=-1171 Y=8768" /></span>
        <span className="w-[78px] border border-[#d5d5d5] bg-[#f6f6f6] pl-px"><Mixed text="层高:3m" /></span>
        <span className="w-[98px] border border-[#d5d5d5] bg-[#f6f6f6] pl-px"><Mixed text="底标高:-0.05m" /></span>
        <span className="w-12 border border-[#d5d5d5] bg-[#f6f6f6] pl-px"><Mixed text="1(1)" /></span>
        <span className="flex-1 border border-[#d5d5d5] bg-[#f6f6f6]" />
      </footer>

      <RebarDisplayPanel />
      <PropertyEditor />

      {/* red callout from 连梁 to the beam in the model */}
      <svg className="pointer-events-none absolute inset-0 h-full w-full" aria-hidden="true">
        <ellipse cx="81" cy="455" rx="20" ry="10" fill="none" stroke="#f04848" />
        <path d="M101 450L826 332V329L837 333L828 339L827 337L101 451z" fill="#ff3b3b" />
        <ellipse cx="853" cy="337" rx="11" ry="22" fill="none" stroke="#c03028" />
      </svg>
    </div>
  );
}
